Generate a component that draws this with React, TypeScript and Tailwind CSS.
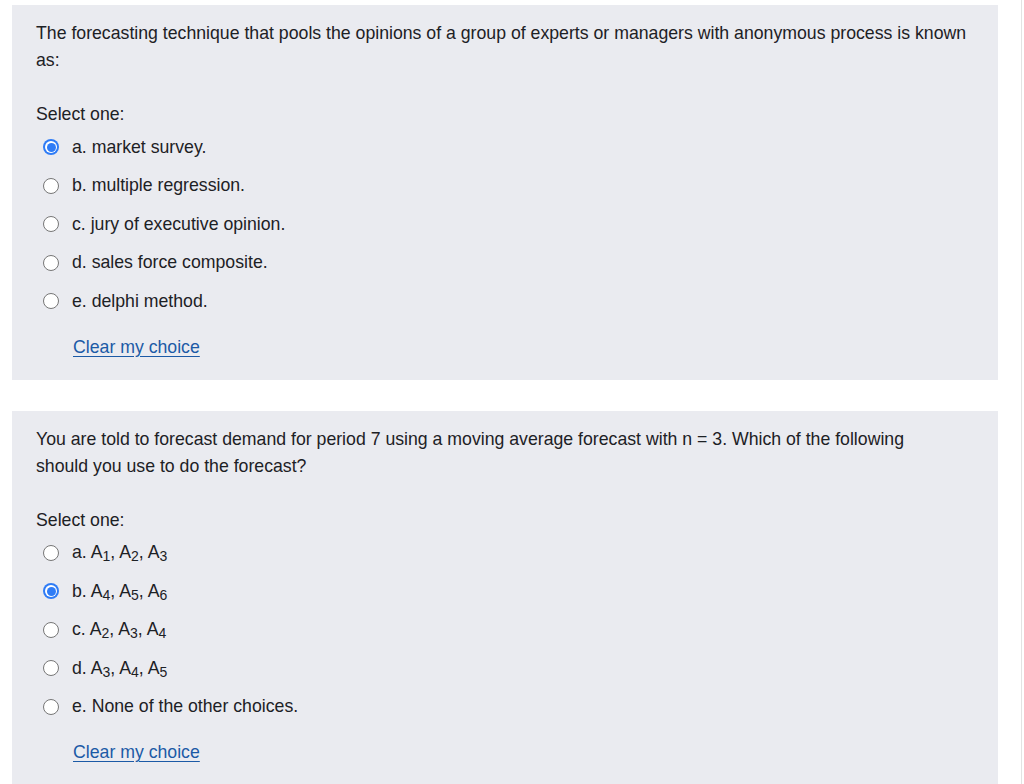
import React from "react";

type Option = { label: React.ReactNode; checked?: boolean };

function Radio({ checked }: { checked?: boolean }) {
  if (checked) {
    return (
      <span className="flex h-[16px] w-[16px] shrink-0 items-center justify-center rounded-full bg-[#2f7cf6]">
        <span className="flex h-[12px] w-[12px] items-center justify-center rounded-full bg-white">
          <span className="h-[9px] w-[9px] rounded-full bg-[#2f7cf6]" />
        </span>
      </span>
    );
  }
  return (
    <span className="h-[16px] w-[16px] shrink-0 rounded-full border-[1.5px] border-[#767676] bg-white" />
  );
}

function A({ n }: { n: number }) {
  return (
    <>
      A<span className="relative top-[3px] text-[14px]">{n}</span>
    </>
  );
}

function Question({ text, options }: { text: React.ReactNode; options: Option[] }) {
  return (
    <section className="bg-[#eaebf0] pl-6 pr-6 pt-[15px] pb-[19px]">
      <p className="leading-[27px]">{text}</p>
      <p className="mt-[27px] leading-[27px]">Select one:</p>
      <div>
        {options.map((o, i) => (
          <div key={i} className="flex h-[38.5px] items-center">
            <span className="flex w-[30px] justify-center">
              <Radio checked={o.checked} />
            </span>
            <span className="ml-[6px]">{o.label}</span>
          </div>
        ))}
      </div>
      <a
        href="#"
        className="ml-[37px] mt-[13px] inline-block leading-[27px] text-[#1c5aa6] underline underline-offset-[3px]"
      >
        Clear my choice
      </a>
    </section>
  );
}

export default function App() {
  return (
    <div className="min-h-[784px] bg-white font-['Liberation_Sans',Arial,sans-serif] text-[17.7px] text-[#1d2125]">
      <div className="mr-[2px] flex flex-col gap-[31px] border-r border-[#e3e3e3] pb-6 pl-[12px] pr-[23px] pt-[5px]">
        <Question
          text="The forecasting technique that pools the opinions of a group of experts or managers with anonymous process is known as:"
          options={[
            { label: "a. market survey.", checked: true },
            { label: "b. multiple regression." },
            { label: "c. jury of executive opinion." },
            { label: "d. sales force composite." },
            { label: "e. delphi method." },
          ]}
        />
        <Question
          text={
            <>
              You are told to forecast demand for period 7 using a moving average forecast with n = 3. Which of the following
              <br />
              should you use to do the forecast?
            </>
          }
          options={[
            { label: <>a. <A n={1} />, <A n={2} />, <A n={3} /></> },
            { label: <>b. <A n={4} />, <A n={5} />, <A n={6} /></>, checked: true },
            { label: <>c. <A n={2} />, <A n={3} />, <A n={4} /></> },
            { label: <>d. <A n={3} />, <A n={4} />, <A n={5} /></> },
            { label: "e. None of the other choices." },
          ]}
        />
      </div>
    </div>
  );
}
